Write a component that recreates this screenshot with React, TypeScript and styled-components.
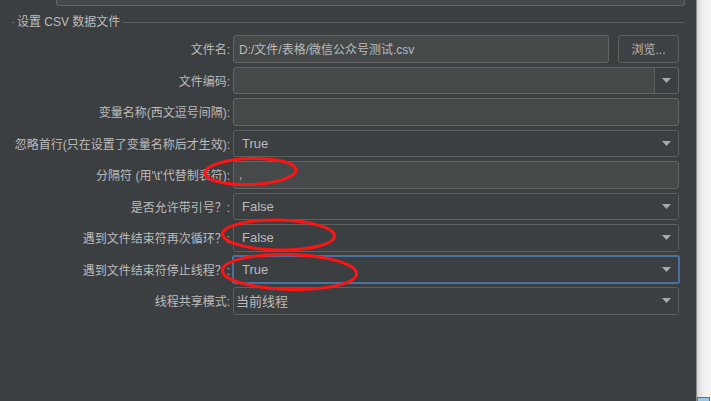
import React from 'react';
import styled, { createGlobalStyle } from 'styled-components';

const GlobalStyle = createGlobalStyle`
    html, body {
        margin: 0;
        padding: 0;
        background: #3c3f41;
    }
    body {
        font-family: "Liberation Sans", "Noto Sans CJK SC", sans-serif;
        color: #bbbbbb;
    }
`;

type Row =
    | { label: string; kind: 'file'; value: string }
    | { label: string; kind: 'editable'; value: string }
    | { label: string; kind: 'text'; value: string }
    | { label: string; kind: 'combo'; value: string; indent?: boolean; focused?: boolean };

const rows: Row[] = [
    { label: '文件名:', kind: 'file', value: 'D:/文件/表格/微信公众号测试.csv' },
    { label: '文件编码:', kind: 'editable', value: '' },
    { label: '变量名称(西文逗号间隔):', kind: 'text', value: '' },
    { label: '忽略首行(只在设置了变量名称后才生效):', kind: 'combo', value: 'True', indent: true },
    { label: "分隔符 (用'\\t'代替制表符):", kind: 'text', value: ',' },
    { label: '是否允许带引号？:', kind: 'combo', value: 'False', indent: true },
    { label: '遇到文件结束符再次循环？:', kind: 'combo', value: 'False', indent: true },
    { label: '遇到文件结束符停止线程？:', kind: 'combo', value: 'True', indent: true, focused: true },
    { label: '线程共享模式:', kind: 'combo', value: '当前线程' },
];

const Arrow = () => (
    <svg width="9" height="5" viewBox="0 0 9 5">
        <path d="M0 0 H9 L4.5 5 Z" fill="#a8a8a8" />
    </svg>
);

const renderField = (row: Row) => {
    switch (row.kind) {
        case 'file':
            return (
                <FileRow>
                    <TextField>{row.value}</TextField>
                    <BrowseButton>浏览...</BrowseButton>
                </FileRow>
            );
        case 'editable':
            return (
                <EditableCombo>
                    <EditableInput>{row.value}</EditableInput>
                    <ArrowBox>
                        <Arrow />
                    </ArrowBox>
                </EditableCombo>
            );
        case 'text':
            return <TextField>{row.value}</TextField>;
        case 'combo':
            return (
                <Combo $focused={row.focused}>
                    <ComboValue $indent={row.indent}>{row.value}</ComboValue>
                    <ArrowBox $plain>
                        <Arrow />
                    </ArrowBox>
                </Combo>
            );
    }
};

export default function App() {
    return (
        <>
            <GlobalStyle />
            <Screen>
                <Panel>
                    <TopStub />
                    <Group>
                        <Legend>
                            <LegendLine $short />
                            <LegendText>设置 CSV 数据文件</LegendText>
                            <LegendLine />
                        </Legend>
                        <FormGrid>
                            {rows.map((row) => (
                                <React.Fragment key={row.label}>
                                    <Label>{row.label}</Label>
                                    {renderField(row)}
                                </React.Fragment>
                            ))}
                        </FormGrid>
                    </Group>
                    <Marks viewBox="0 0 697 401">
                        <ellipse cx="250.5" cy="171.5" rx="45.5" ry="13" transform="rotate(-2 250.5 171.5)" />
                        <ellipse cx="278.5" cy="235" rx="56" ry="15" transform="rotate(1 278.5 235)" />
                        <ellipse cx="289.5" cy="272" rx="67" ry="17.5" transform="rotate(1.5 289.5 272)" />
                    </Marks>
                </Panel>
                <Strip>
                    <StripTab />
                </Strip>
            </Screen>
        </>
    );
}

const Screen = styled.div`
    display: flex;
    height: 401px;
    overflow: hidden;
`;

const Panel = styled.div`
    position: relative;
    flex: 1;
    background: #3c3f41;
`;

const TopStub = styled.div`
    margin-left: 56px;
    width: 627px;
    height: 5px;
    background: #45494a;
    border: 1px solid #646464;
    border-top: none;
    border-radius: 0 0 3px 3px;
`;

const Group = styled.div`
    margin: 8px 12px 0 12px;
`;

const Legend = styled.div`
    display: flex;
    align-items: center;
    height: 16px;
`;

const LegendLine = styled.div<{ $short?: boolean }>`
    height: 1px;
    background: #5e6060;
    flex: ${(p) => (p.$short ? '0 0 3px' : '1')};
`;

const LegendText = styled.span`
    padding: 0 3px 0 2px;
    font-size: 12px;
    line-height: 16px;
    color: #bbbbbb;
`;

const FormGrid = styled.div`
    display: grid;
    grid-template-columns: 218px 1fr;
    grid-auto-rows: 27.5px;
    column-gap: 3px;
    row-gap: 4px;
    margin-top: 5px;
    padding-right: 5px;
`;

const Label = styled.div`
    display: flex;
    align-items: center;
    justify-content: flex-end;
    white-space: nowrap;
    font-size: 12px;
    color: #bbbbbb;
`;

const FileRow = styled.div`
    display: flex;
    gap: 9px;
`;

const TextField = styled.div`
    flex: 1;
    display: flex;
    align-items: center;
    box-sizing: border-box;
    padding: 0 5px;
    background: #45494a;
    border: 1px solid #646464;
    border-radius: 3px;
    font-size: 12px;
    color: #bbbbbb;
    white-space: nowrap;
`;

const BrowseButton = styled.div`
    width: 61px;
    box-sizing: border-box;
    display: flex;
    align-items: center;
    justify-content: center;
    background: #3f4244;
    border: 1px solid #5e6060;
    border-radius: 3px;
    font-size: 12px;
    color: #bbbbbb;
`;

const EditableCombo = styled.div`
    display: flex;
    box-sizing: border-box;
    background: #45494a;
    border: 1px solid #646464;
    border-radius: 3px;
    overflow: hidden;
`;

const EditableInput = styled.div`
    flex: 1;
    padding: 0 5px;
    font-size: 12px;
`;

const ArrowBox = styled.div<{ $plain?: boolean }>`
    width: 23px;
    display: flex;
    align-items: center;
    justify-content: center;
    background: #3c3f41;
    border-left: ${(p) => (p.$plain ? 'none' : '1px solid #5e6060')};
    padding-left: ${(p) => (p.$plain ? '1px' : '0')};
`;

const Combo = styled.div<{ $focused?: boolean }>`
    display: flex;
    align-items: stretch;
    box-sizing: border-box;
    background: #3c3f41;
    border: ${(p) => (p.$focused ? '2px solid #4a72a0' : '1px solid #5e6060')};
    margin: ${(p) => (p.$focused ? '-1px' : '0')};
    border-radius: 3px;
`;

const ComboValue = styled.div<{ $indent?: boolean }>`
    flex: 1;
    display: flex;
    align-items: center;
    padding-left: ${(p) => (p.$indent ? '8px' : '2px')};
    font-size: 13px;
    color: #bbbbbb;
`;

const Marks = styled.svg`
    position: absolute;
    inset: 0;
    width: 697px;
    height: 401px;
    pointer-events: none;
    fill: none;
    stroke: #ff1414;
    stroke-width: 3;
`;

const Strip = styled.div`
    position: relative;
    width: 14px;
    border-left: 1px solid #8a8a8a;
    background: linear-gradient(to right, #d4d4d4, #eeeeee 40%, #f4f4f4);
`;

const StripTab = styled.div`
    position: absolute;
    left: 0;
    right: 1px;
    bottom: 0;
    height: 3px;
    background: #9cc3e4;
    border: 1px solid #3d7ab5;
    border-bottom: none;
`;
